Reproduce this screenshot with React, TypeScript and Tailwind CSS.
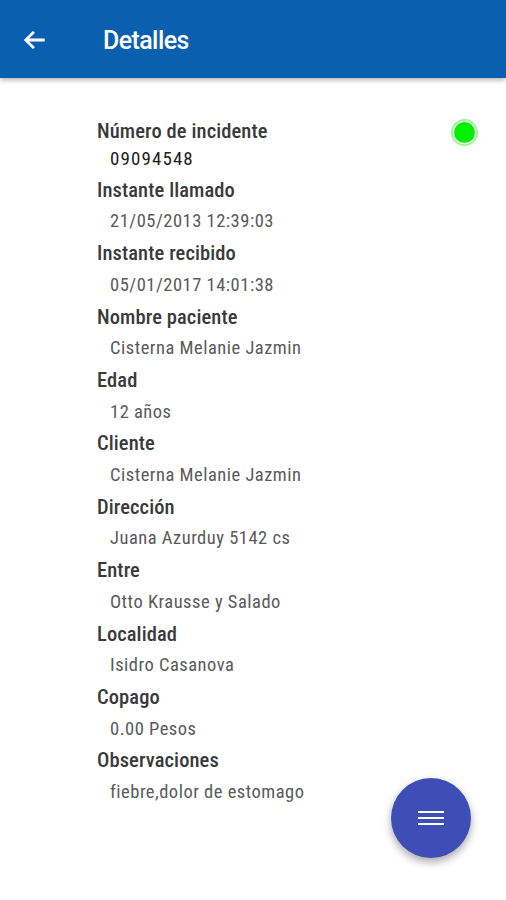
import type { ReactNode } from 'react'

// Incident detail rows, label + indented value.
const FIELDS: { label: string; value: string }[] = [
  { label: 'Instante llamado', value: '21/05/2013 12:39:03' },
  { label: 'Instante recibido', value: '05/01/2017 14:01:38' },
  { label: 'Nombre paciente', value: 'Cisterna Melanie Jazmin' },
  { label: 'Edad', value: '12 años' },
  { label: 'Cliente', value: 'Cisterna Melanie Jazmin' },
  { label: 'Dirección', value: 'Juana Azurduy 5142 cs' },
  { label: 'Entre', value: 'Otto Krausse y Salado' },
  { label: 'Localidad', value: 'Isidro Casanova' },
  { label: 'Copago', value: '0.00 Pesos' },
  { label: 'Observaciones', value: 'fiebre,dolor de estomago' },
]

function Label({ children }: { children: ReactNode }) {
  return (
    <div className="font-stretch-condensed text-[20.5px] font-medium leading-[31.7px] tracking-[0.1px] text-[#3a3a3a]">
      {children}
    </div>
  )
}

function Value({ children }: { children: ReactNode }) {
  return (
    <div className="pl-[13px] font-stretch-condensed text-[18.5px] leading-[31.7px] tracking-[0.5px] text-[#5a5a5a]">
      {children}
    </div>
  )
}

export default function App() {
  return (
    <div className="relative h-[900px] w-[506px] overflow-hidden bg-white font-['Roboto',sans-serif]">
      <header className="flex h-[78px] items-center bg-[#0a5fae] shadow-[0_2px_5px_rgba(0,0,0,0.3)]">
        <svg width="26" height="26" viewBox="0 0 24 24" className="ml-[22px] mt-[2px]" fill="none">
          <path d="M21 12H4M11 4.5 3.5 12l7.5 7.5" stroke="white" strokeWidth="2.6" />
        </svg>
        <h1 className="ml-[55px] mt-[4px] text-[25px] font-medium tracking-[-0.6px] text-white">Detalles</h1>
      </header>

      <div className="flex items-start pl-[97px] pr-[28px] pt-[37.5px]">
        <div className="flex-1">
          <Label>Número de incidente</Label>
          <div className="-mt-[2.5px] mb-[3px] pl-[13px] font-stretch-condensed text-[19px] leading-[27px] tracking-[1.1px] text-[#1e1e1e]">
            09094548
          </div>
          {FIELDS.map((f) => (
            <div key={f.label}>
              <Label>{f.label}</Label>
              <Value>{f.value}</Value>
            </div>
          ))}
        </div>
        <div className="mt-[3.5px] flex h-[27px] w-[27px] items-center justify-center rounded-full border-2 border-[#9cf59c]">
          <div className="h-[21px] w-[21px] rounded-full bg-[#00f000]" />
        </div>
      </div>

      <button className="absolute left-[391px] top-[778px] flex h-[80px] w-[80px] items-center justify-center rounded-full bg-[#3d4fb6] shadow-[0_4px_8px_rgba(0,0,0,0.35)]">
        <svg width="26" height="16" viewBox="0 0 26 16">
          <path d="M0 2h26M0 8h26M0 14h26" stroke="white" strokeWidth="2.2" />
        </svg>
      </button>
    </div>
  )
}
